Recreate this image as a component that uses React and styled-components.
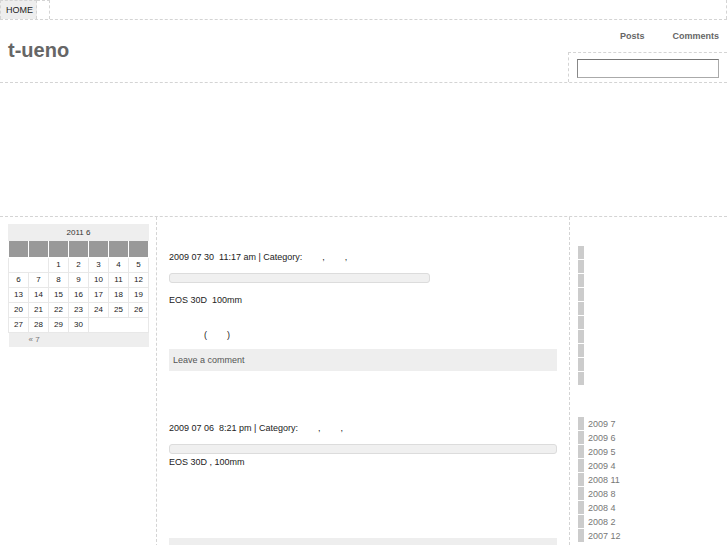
import React from "react";
import styled, { createGlobalStyle } from "styled-components";

const Global = createGlobalStyle`
  html, body { margin: 0; padding: 0; background: #fff; }
  body { font-family: "Liberation Sans", Arial, sans-serif; font-size: 9px; color: #333; }
  * { box-sizing: border-box; }
`;

const dash = "1px dashed #d4d4d4";

const Nav = styled.nav`
  display: flex;
  height: 20px;
  border-bottom: ${dash};
`;
const NavTab = styled.a`
  display: flex;
  align-items: center;
  padding: 0 5px;
  width: 37px;
  background: #eee;
  border: ${dash};
  border-bottom: none;
  color: #222;
  font-size: 9px;
  text-decoration: none;
`;
const NavGap = styled.div`
  width: 13px;
  border-top: ${dash};
  border-right: ${dash};
`;
const NavRest = styled.div`
  flex: 1;
  border-right: ${dash};
`;

const Header = styled.header`
  display: flex;
  justify-content: space-between;
  height: 63px;
  border-bottom: ${dash};
`;
const Title = styled.h1`
  margin: 0;
  padding: 19px 0 0 8px;
  font-size: 20px;
  font-weight: bold;
  color: #666;
`;
const HeaderRight = styled.div`
  display: flex;
  flex-direction: column;
  align-items: flex-end;
  justify-content: space-between;
  width: 159px;
`;
const Links = styled.div`
  display: flex;
  gap: 28px;
  padding: 11px 8px 0 0;
`;
const HLink = styled.a`
  font-size: 9px;
  font-weight: bold;
  color: #666;
  text-decoration: none;
`;
const SearchBox = styled.div`
  width: 159px;
  height: 30px;
  border-top: ${dash};
  border-left: ${dash};
  padding: 6px 8px 0 8px;
`;
const SearchInput = styled.input`
  display: block;
  width: 142px;
  height: 19px;
  border: 1px solid #aaa;
  border-top-color: #777;
  border-left-color: #888;
  outline: none;
`;

const Banner = styled.div`
  height: 134px;
  border-bottom: ${dash};
`;

const Main = styled.div`
  display: grid;
  grid-template-columns: 157px 413px 1fr;
`;
const LeftCol = styled.aside`
  border-right: ${dash};
  padding: 7px 8px;
  height: 330px;
`;
const Center = styled.main`
  border-right: ${dash};
  padding: 0 12px 0 12px;
`;
const RightCol = styled.aside`
  padding: 29px 0 0 8px;
`;

const Cal = styled.table`
  width: 141px;
  border-collapse: collapse;
  font-size: 8px;
  color: #222;
`;
const Caption = styled.caption`
  background: #eee;
  height: 17px;
  line-height: 17px;
  text-align: center;
  color: #333;
`;
const Th = styled.th`
  background: #999;
  height: 16px;
  border: 1px solid #fff;
  border-top: none;
  width: 20px;
`;
const Td = styled.td`
  height: 15px;
  border: 1px solid #e8e8e8;
  text-align: center;
  padding: 0;
`;
const Foot = styled.td`
  background: #eee;
  height: 15px;
  color: #777;
  padding-left: 20px;
`;

const Post = styled.article`
  display: flex;
  flex-direction: column;
`;
const Meta = styled.div`
  font-size: 9px;
  color: #222;
  margin-top: ${(p) => p.$top}px;
  height: 11px;
`;
const Bar = styled.div`
  width: ${(p) => p.$w};
  height: 10px;
  margin-top: ${(p) => p.$gap}px;
  background: #f0f0f0;
  border: 1px solid #dcdcdc;
  border-radius: 3px;
`;
const Body = styled.p`
  margin: ${(p) => p.$gap}px 0 0 0;
  font-size: 9px;
  color: #222;
  height: 11px;
`;
const Paren = styled.p`
  margin: 24px 0 0 35px;
  font-size: 9px;
  color: #222;
  height: 11px;
  white-space: pre;
`;
const Comment = styled.div`
  margin-top: ${(p) => p.$gap}px;
  height: 22px;
  background: #eee;
  padding: 0 4px;
  display: flex;
  align-items: center;
  font-size: 9px;
  color: #555;
`;

const GrayList = styled.ul`
  list-style: none;
  margin: 0;
  padding: 0;
  display: flex;
  flex-direction: column;
  gap: 1px;
`;
const GrayItem = styled.li`
  width: 6px;
  height: 13px;
  background: #ccc;
`;
const Archive = styled.ul`
  list-style: none;
  margin: 32px 0 0 0;
  padding: 0;
  display: flex;
  flex-direction: column;
  gap: 1px;
`;
const ArchItem = styled.li`
  display: flex;
  align-items: center;
  gap: 4px;
  height: 13px;
  font-size: 9px;
  color: #777;
  &::before {
    content: "";
    width: 6px;
    height: 13px;
    background: #ccc;
  }
`;

const weeks = [
  [6, 7, 8, 9, 10, 11, 12],
  [13, 14, 15, 16, 17, 18, 19],
  [20, 21, 22, 23, 24, 25, 26],
];

const archives = ["2009 7", "2009 6", "2009 5", "2009 4", "2008 11", "2008 8", "2008 4", "2008 2", "2007 12"];

export default function App() {
  return (
    <>
      <Global />
      <Nav>
        <NavTab href="#">HOME</NavTab>
        <NavGap />
        <NavRest />
      </Nav>
      <Header>
        <Title>t-ueno</Title>
        <HeaderRight>
          <Links>
            <HLink href="#">Posts</HLink>
            <HLink href="#">Comments</HLink>
          </Links>
          <SearchBox>
            <SearchInput type="text" />
          </SearchBox>
        </HeaderRight>
      </Header>
      <Banner />
      <Main>
        <LeftCol>
          <Cal>
            <Caption>2011 6</Caption>
            <thead>
              <tr>
                {Array.from({ length: 7 }).map((_, i) => (
                  <Th key={i} />
                ))}
              </tr>
            </thead>
            <tbody>
              <tr>
                <Td colSpan={2} />
                {[1, 2, 3, 4, 5].map((d) => (
                  <Td key={d}>{d}</Td>
                ))}
              </tr>
              {weeks.map((w, i) => (
                <tr key={i}>
                  {w.map((d) => (
                    <Td key={d}>{d}</Td>
                  ))}
                </tr>
              ))}
              <tr>
                {[27, 28, 29, 30].map((d) => (
                  <Td key={d}>{d}</Td>
                ))}
                <Td colSpan={3} />
              </tr>
            </tbody>
            <tfoot>
              <tr>
                <Foot colSpan={7}>« 7</Foot>
              </tr>
            </tfoot>
          </Cal>
        </LeftCol>
        <Center>
          <Post>
            <Meta $top={35}>2009 07 30&nbsp; 11:17 am | Category: &nbsp; &nbsp; &nbsp; &nbsp;, &nbsp; &nbsp; &nbsp; &nbsp;,</Meta>
            <Bar $w="261px" $gap={10} />
            <Body $gap={12}>EOS 30D&nbsp; 100mm</Body>
            <Paren>(        )</Paren>
            <Comment $gap={8}>Leave a comment</Comment>
          </Post>
          <Post>
            <Meta $top={52}>2009 07 06&nbsp; 8:21 pm | Category: &nbsp; &nbsp; &nbsp; &nbsp;, &nbsp; &nbsp; &nbsp; &nbsp;,</Meta>
            <Bar $w="388px" $gap={10} />
            <Body $gap={3}>EOS 30D , 100mm</Body>
            <Comment $gap={70}>Leave a comment</Comment>
          </Post>
        </Center>
        <RightCol>
          <GrayList>
            {Array.from({ length: 10 }).map((_, i) => (
              <GrayItem key={i} />
            ))}
          </GrayList>
          <Archive>
            {archives.map((a) => (
              <ArchItem key={a}>{a}</ArchItem>
            ))}
          </Archive>
        </RightCol>
      </Main>
    </>
  );
}
